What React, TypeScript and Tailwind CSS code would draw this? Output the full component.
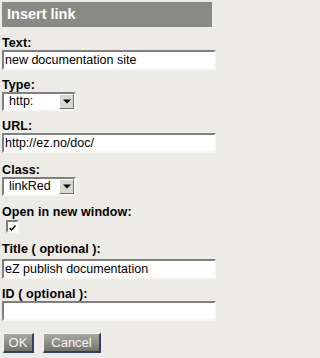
import React from "react";

function Label({ children, className = "" }: { children: React.ReactNode; className?: string }) {
  return (
    <div className={`h-[13px] whitespace-pre text-[12.5px] leading-[13px] font-bold text-black tracking-[0.1px] ${className}`}>
      {children}
    </div>
  );
}

function TextBox({ value, className = "" }: { value: string; className?: string }) {
  return (
    <div
      className={`h-[20px] w-[214px] border-2 border-t-[#7f7f7f] border-l-[#7f7f7f] border-b-[#f7f7f4] border-r-[#f7f7f4] bg-white pl-[1px] text-[12.5px] leading-[16px] text-black whitespace-nowrap overflow-hidden ${className}`}
    >
      {value}
    </div>
  );
}

function Select({ value }: { value: string }) {
  return (
    <div className="flex h-[19px] w-[74px] border-2 border-t-[#7f7f7f] border-l-[#7f7f7f] border-b-[#f7f7f4] border-r-[#f7f7f4] bg-white">
      <div className="flex-1 pl-[5px] text-[12.5px] leading-[15px] text-black">{value}</div>
      <div className="flex w-[15px] items-center justify-center border border-t-white border-l-white border-b-[#707070] border-r-[#707070] bg-[#d8d7d1]">
        <svg width="8" height="5" viewBox="0 0 8 5">
          <path d="M0 0.5H8L4 4.5Z" fill="#000" />
        </svg>
      </div>
    </div>
  );
}

function Btn({ children, w }: { children: React.ReactNode; w: string }) {
  return (
    <div
      className={`flex h-[20px] ${w} items-center justify-center border-t border-l border-t-[#f2f2ee] border-l-[#f2f2ee] border-b-2 border-r-2 border-b-[#33425a] border-r-[#33425a] bg-linear-to-b from-[#a8a8a3] to-[#74746f] text-[13px] leading-[16px] text-[#f4f4f4]`}
    >
      {children}
    </div>
  );
}

export default function App() {
  return (
    <div className="min-h-screen w-full bg-[#ecebe5] font-['Liberation_Sans',Arial,sans-serif] overflow-hidden">
      <div className="pt-[2px] pl-[2px]">
        <div className="h-[25px] w-[210px] bg-[#8a8a85] pl-[5px] text-[14.5px] leading-[25px] font-bold text-white">
          Insert link
        </div>
      </div>
      <div className="flex flex-col pl-[2px]">
        <Label className="mt-[10px]">Text:</Label>
        <TextBox value="new documentation site" />

        <Label className="mt-[9px]">Type:</Label>
        <Select value="http:" />

        <Label className="mt-[9px]">URL:</Label>
        <TextBox value="http://ez.no/doc/" />

        <Label className="mt-[11px]">Class:</Label>
        <Select value="linkRed" />

        <Label className="mt-[10px]">Open in new window:</Label>
        <div className="mt-[1px] ml-[4px] h-[13px] w-[13px] border-2 border-t-[#7f7f7f] border-l-[#7f7f7f] border-b-[#f7f7f4] border-r-[#f7f7f4] bg-white relative">
          <svg className="absolute left-[1px] top-[3px]" width="7" height="6" viewBox="0 0 7 6">
            <path d="M0.5 3L2.5 5L6.5 0.5" stroke="#000" strokeWidth="1.4" fill="none" />
          </svg>
        </div>

        <Label className="mt-[10px]">Title ( optional ):</Label>
        <TextBox value="eZ publish documentation" className="mt-[3px]" />

        <Label className="mt-[9px]">ID ( optional ):</Label>
        <TextBox value="" />

        <div className="mt-[12px] ml-[1px] flex gap-[9px]">
          <Btn w="w-[31px]">OK</Btn>
          <Btn w="w-[58px]">Cancel</Btn>
        </div>
      </div>
    </div>
  );
}
